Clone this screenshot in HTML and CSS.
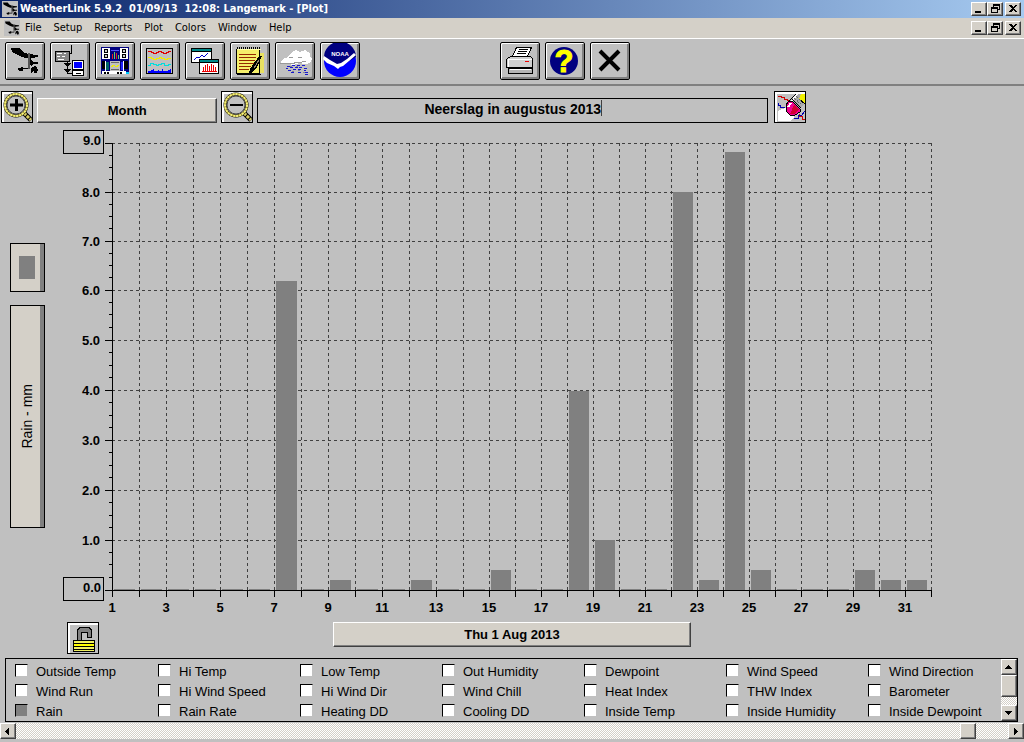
FILE: index.html
```
<!DOCTYPE html>
<html lang="en">
<head>
<meta charset="utf-8">
<title>WeatherLink - Plot</title>
<link rel="stylesheet" href="styles.css">
</head>
<body>
<svg class="defs" aria-hidden="true">
  <symbol id="vane" viewBox="4 3 31 31">
    <path d="M6 6h9l3 4 5 2 10 1v2l-7 1v2l3 2h4v2h-4l-3 2v-1h-3V16h-3l-5-2-8-4z"/>
    <path d="M23.500 11v16" stroke="#555" stroke-width="2"/>
    <path d="M13 26h2l1-1h2v1h5v1h-5v2h-4v-1h-1zM27 25l4-1 2 4-1 3h-3v-3l-3 3v-3z"/>
  </symbol>
  <symbol id="min" viewBox="0 0 12 10"><path d="M2 7h6v2H2z"/></symbol>
  <symbol id="restore" viewBox="0 0 12 10"><path d="M4 0h7v6H9V5h1V2H5v1H4zM2 3h7v6H2zM3 5v3h5V5z" fill-rule="evenodd"/></symbol>
  <symbol id="close" viewBox="0 0 12 10"><path d="M2 1h2l2 2 2-2h2L7 4.500 10 8H8L6 6 4 8H2l3-3.500z"/></symbol>
  <symbol id="lens" viewBox="0 0 30 30">
    <path d="M22 21l7 7" stroke="#000" stroke-width="5"/>
    <path d="M22 21l7 7" stroke="#d8cc60" stroke-width="3" stroke-dasharray="3 1"/>
    <circle cx="14" cy="13" r="11" fill="#c0c0c0" stroke="#000" stroke-width="3"/>
    <circle cx="14" cy="13" r="11" fill="none" stroke="#a89c30" stroke-width="2"/>
    <circle cx="14" cy="13" r="11" fill="none" stroke="#f4f080" stroke-width="2" stroke-dasharray="2 1"/>
    <circle cx="14" cy="13" r="9" fill="none" stroke="#444"/>
  </symbol>
</svg>

<header class="titlebar">
  <svg class="app-icon"><use href="#vane"/></svg>
  <h1 class="title">WeatherLink 5.9.2&nbsp; 01/09/13&nbsp; 12:08: Langemark - [Plot]</h1>
  <div class="caption">
    <button aria-label="Minimize"><svg><use href="#min"/></svg></button><button aria-label="Restore"><svg><use href="#restore"/></svg></button><button class="apart" aria-label="Close"><svg><use href="#close"/></svg></button>
  </div>
</header>

<nav class="menubar">
  <svg class="app-icon"><use href="#vane"/></svg>
  <button class="menu">File</button><button class="menu">Setup</button><button class="menu">Reports</button><button class="menu">Plot</button><button class="menu">Colors</button><button class="menu">Window</button><button class="menu">Help</button>
  <div class="caption">
    <button aria-label="Minimize plot"><svg><use href="#min"/></svg></button><button aria-label="Restore plot"><svg><use href="#restore"/></svg></button><button class="apart" aria-label="Close plot"><svg><use href="#close"/></svg></button>
  </div>
</nav>

<div class="toolbar">
  <button class="tool" aria-label="Station"><svg viewBox="1 1 38 36">
    <path d="M6 6h9l3 4 5 2 10 1v2l-7 1v2l3 2h4v2h-4l-3 2v-1h-3V16h-3l-5-2-8-4z"/>
    <path d="M23.500 11v16" stroke="#555" stroke-width="2"/>
    <path d="M13 26h2l1-1h2v1h5v1h-5v2h-4v-1h-1zM27 25l4-1 2 4-1 3h-3v-3l-3 3v-3z"/>
  </svg></button>
  <button class="tool" aria-label="Download"><svg viewBox="1 1 38 36">
    <path d="M21.500 3v8.500H18" fill="none" stroke="#000"/>
    <path d="M5.500 9.500h14v10h-14z" fill="#888" stroke="#000"/>
    <path d="M7 11.500h5M7 14.500h3M12 14.500h3M8 17.500h6M14 11.500h2" stroke="#fff"/>
    <path d="M17.500 20v12M18 31.500h4" stroke="#000"/>
    <path d="M14 21h7v1h-1v1h-1v1h-3v-1h-1v-1h-1zM14 27h7v1h-1v1h-1v1h-3v-1h-1v-1h-1z"/>
    <path d="M22.500 18.500h11v9h-11z" fill="#fff" stroke="#000"/><path d="M24 20h8v6h-8z" fill="#00f"/>
    <path d="M22.500 28.500h11v5h-11z" fill="#fff" stroke="#000"/><path d="M26 31.500h5" stroke="#000"/>
  </svg></button>
  <button class="tool" aria-label="Bulletin"><svg viewBox="1 1 38 36">
    <path d="M6 5h28v27H6z" fill="#000080"/>
    <path d="M7 6h8v11H7zM25 6h8v11h-8z" fill="#fff"/>
    <path d="M9 7h4v4H9zM9 12h4v4H9zM27 7h4v4h-4zM27 12h4v4h-4z"/>
    <path d="M10 8h2v2h-2zM10 13h2v2h-2zM28 8h2v2h-2zM28 13h2v2h-2z" fill="#ccc"/>
    <path d="M16 8h8v1h-8z" fill="#55f"/>
    <path d="M17.500 12v5M21.500 11v6" stroke="#d22"/><path d="M19.500 10v7M23.500 13v4" stroke="#6c6"/>
    <path d="M7 19h3v8H7zM29 19h4v8h-4z"/><path d="M11 20h3v8h-3z" fill="#066"/><path d="M26 20h2v8h-2z" fill="#22f"/>
    <path d="M10.500 19v10M28.500 19v10" stroke="#fff"/>
    <path d="M15 19h10v10H15z" fill="#c0c0c0"/><path d="M16 20h8v1h-8zM16 27h8v1h-8z" fill="#666"/>
    <path d="M16 25l3-2 2 2 3-2" fill="none" stroke="#ee0"/>
    <path d="M7 29h24v3H7z" fill="#fff"/><path d="M9 30h2v2H9zM12 30h2v2h-2zM22 30h2v2h-2zM25 30h2v2h-2z"/><path d="M31 30h3v2h-3z" fill="#0cf"/>
  </svg></button>
  <button class="tool" aria-label="Plot"><svg viewBox="1 1 38 36">
    <path d="M6.500 6.500h26v25h-26z" fill="#c0c0c0" stroke="#000"/>
    <path d="M8 9.500h3v1h2v1h3v-1h2v-1h3v1h2v1h3v-1h2v-1h3" fill="none" stroke="#d00"/>
    <path d="M8 15.500h3v1h2v1h3v-1h3v-1h2v1h3v1h3v-1h4" fill="none" stroke="#ee0"/>
    <path d="M8 23.500h2v-2h3v1h3v1h2v-1h3v-1h3v2h4v-1h3" fill="none" stroke="#0dd"/>
    <path d="M8 31v-2h3v-1h2v-1h1v2h4v-1h1v1h3v-2h1v2h5v-1h2v-1h1v4z" fill="#00f"/>
  </svg></button>
  <button class="tool" aria-label="Strip charts"><svg viewBox="1 1 38 36">
    <path d="M6.500 6.500h20v14h-20z" fill="#fff" stroke="#000"/><path d="M7 7h19v2H7z" fill="#088"/><path d="M7 9h19v1H7z"/>
    <path d="M9 18l3-3 2 1 3-3 2 2 4-4" fill="none" stroke="#00c"/>
    <path d="M14.500 17.500h19v14h-19z" fill="#fff" stroke="#000"/><path d="M15 18h18v2H15z" fill="#088"/><path d="M15 20h18v1H15z"/>
    <path d="M18.500 25v5M20.500 23v7M22.500 22v8M24.500 24v6M26.500 22v8M28.500 23v7M30.500 25v5M17 29.500h15" stroke="#e00"/>
  </svg></button>
  <button class="tool" aria-label="Notes"><svg viewBox="1 1 38 36">
    <path d="M30 11h4v20h-4z" fill="#e8e060"/>
    <path d="M6.500 7.500h23v24h-23z" fill="#f5ef6a" stroke="#000"/>
    <path d="M7 6.500h24" stroke="#000" stroke-width="3" stroke-dasharray="1 1"/><path d="M7 7.500h24" stroke="#ffa"/>
    <path d="M9 12.500h17M9 15.500h17M9 18.500h16M9 21.500h15M9 24.500h12M9 27.500h10" stroke="#952800"/>
    <path d="M29 14h3l-6 13-3 2-2 3h-2l1-5z"/><path d="M29 18l-5 8" stroke="#987"/>
    <path d="M7 32.500h24" stroke="#000"/>
  </svg></button>
  <button class="tool" aria-label="Rain"><svg viewBox="1 1 38 36">
    <path d="M5 20l3-3 5-2 3-4 5-3 4 2 5-2 5 3v3l2 3-2 4-5 1-6-1-5 2-7-1-6-1z" fill="#fff"/>
    <path d="M5 21h8l4 1 5-2h5l4-1M23 15l4 1M14 15h4" fill="none" stroke="#999"/>
    <path d="M12 24.500h3m2-1h3m2 0h3m2 0h3M11 26.500h2m2-1h3m2 0h3m2 0h2m2 1h3M13 28.500h3m2-1h3m2 0h3m3 1h2M16 30.500h3m4 0h3m4 0h3m-9-5h2m4 7h3" stroke="#1818d0"/>
    <path d="M15 24.500h2m4 0h2m-6 5h2m4-1h2m3 2h2" stroke="#808098"/>
  </svg></button>
  <button class="tool" aria-label="NOAA reports"><svg class="smooth" viewBox="1 1 38 36">
    <circle cx="20" cy="19" r="16" fill="#00f"/>
    <path d="M4 16a16 16 0 0 1 32-1L21 24z" fill="#000080"/>
    <path d="M4 14l6 4 7 4 4-1 6-4 7-6 2 2-7 6-6 5-3 1-2 2-4-3-7-3-4-4z" fill="#fff"/>
    <text x="20" y="14" class="noaa">NOAA</text>
  </svg></button>
  <span class="tool-space"></span>
  <button class="tool" aria-label="Print"><svg viewBox="1 1 38 36">
    <path d="M8.500 15.500l3-1h19l2 2v9h-26v-8z" fill="#d0d0d0" stroke="#000"/>
    <path d="M16.500 5.500h15l-4 9h-15z" fill="#fff" stroke="#000"/>
    <path d="M19 7.500h9M18 9.500h9M17 11.500h9" stroke="#000"/>
    <path d="M8 17h24v1H8zM8 17h1v8H8z" fill="#fff"/>
    <path d="M8.500 26.500h24v5h-24z" fill="#b4b4b4" stroke="#000"/><path d="M10 27h21v1H10z" fill="#fff"/>
    <path d="M25 19h4v1h-4z" fill="#e00"/>
  </svg></button>
  <button class="tool" aria-label="Help"><svg class="smooth" viewBox="1 1 38 36">
    <circle cx="19" cy="19" r="14" fill="#000080"/>
    <text x="19" y="30" class="question">?</text>
  </svg></button>
  <button class="tool" aria-label="Close window"><svg class="smooth" viewBox="1 1 38 36">
    <path d="M10 9l19 19M29 9L10 28" stroke="#000" stroke-width="4"/>
  </svg></button>
</div>

<div class="controls">
  <button class="square" aria-label="Zoom in"><svg class="smooth"><use href="#lens"/><path d="M8 13h13M14.500 7v12" stroke="#000" stroke-width="3"/></svg></button>
  <button class="raised span">Month</button>
  <button class="square" aria-label="Zoom out"><svg class="smooth"><use href="#lens"/><path d="M8 13h13" stroke="#000" stroke-width="2"/></svg></button>
  <div class="title-field"><input type="text" aria-label="Plot title" value="Neerslag in augustus 2013"><span class="caret"></span></div>
  <button class="square eraser" aria-label="Clear plot"><svg viewBox="1 1 30 30">
    <path d="M3 3h28v28H3z" fill="#c0c0c0"/>
    <path d="M4 30V20l7-3 9 9-4 4z" fill="#fff"/>
    <path d="M4 5.500h3v1h3v2h3v1h3v2h3M25 23v2h3v3h3" fill="none" stroke="#d00000"/>
    <path d="M4.500 12v2h2v2h4M20 27h4v-3h4l3-4" fill="none" stroke="#0000b0"/>
    <path d="M22 3l-6 7 9 8 6-6V3z" fill="#aaa"/><path d="M22 3l3-1-5 7-3 1z" fill="#fff"/>
    <path d="M27 3h4v10l-6-5z" fill="#f0f000"/><path d="M25 8l6 5M22 3l-7 7M18 8l9 9" stroke="#000"/>
    <path d="M20 7l8 7M22 5l7 7" stroke="#666" stroke-dasharray="1 1"/>
    <path d="M12 14l3-4h3l8 8v3l-5 3h-5l-4-4z" fill="#f00090" stroke="#000"/>
    <path d="M20 14l5 5-5 4h-4z" fill="#d00030"/><path d="M14 16l3-4" stroke="#fff" stroke-width="2"/>
  </svg></button>
</div>

<main class="plot">
  <div class="series">
    <button class="series-button swatch" aria-label="Rain color"><span></span></button>
    <button class="series-button series-name"><span>Rain - mm</span></button>
  </div>
  <svg class="chart" viewBox="45 124 979 494" role="img" aria-label="Rain in mm per day">
    <path class="grid" d="M112 143.500H931M112 192.500H931M112 241.500H931M112 290.500H931M112 340.500H931M112 390.500H931M112 440.500H931M112 490.500H931M112 540.500H931"/>
    <path class="grid" d="M139.500 143V590M166.500 143V590M193.500 143V590M220.500 143V590M247.500 143V590M274.500 143V590M301.500 143V590M328.500 143V590M355.500 143V590M382.500 143V590M409.500 143V590M436.500 143V590M463.500 143V590M489.500 143V590M515.500 143V590M541.500 143V590M567.500 143V590M593.500 143V590M619.500 143V590M645.500 143V590M671.500 143V590M697.500 143V590M723.500 143V590M749.500 143V590M775.500 143V590M801.500 143V590M827.500 143V590M853.500 143V590M879.500 143V590M905.500 143V590M931.500 143V590"/>
    <path class="bars" d="M276 281h21V590h-21zM330 580h21v10h-21zM411 580h21v10h-21zM491 570h20v20h-20zM569 391h20V590h-20zM595 540h20v50h-20zM673 192h20V590h-20zM699 580h20v10h-20zM725 152h20V590h-20zM751 570h20v20h-20zM855 570h20v20h-20zM881 580h20v10h-20zM907 580h20v10h-20z"/>
    <path class="bars" d="M114 589h21v1h-21zM141 589h21v1h-21zM168 589h21v1h-21zM195 589h21v1h-21zM222 589h21v1h-21zM249 589h21v1h-21zM303 589h21v1h-21zM357 589h21v1h-21zM384 589h21v1h-21zM438 589h21v1h-21zM465 589h20v1h-20zM517 589h20v1h-20zM543 589h20v1h-20zM621 589h20v1h-20zM647 589h20v1h-20zM777 589h20v1h-20zM803 589h20v1h-20zM829 589h20v1h-20z"/>
    <path class="axis" d="M112.500 143V597M105 590.500H932M105 143.500h7M105 192.500h7M105 241.500h7M105 290.500h7M105 340.500h7M105 390.500h7M105 440.500h7M105 490.500h7M105 540.500h7"/>
    <path class="axis" d="M109 155.500h3M109 167.500h3M109 179.500h3M109 204.500h3M109 216.500h3M109 228.500h3M109 253.500h3M109 265.500h3M109 277.500h3M109 302.500h3M109 314.500h3M109 327.500h3M109 352.500h3M109 365.500h3M109 377.500h3M109 402.500h3M109 415.500h3M109 427.500h3M109 452.500h3M109 465.500h3M109 477.500h3M109 502.500h3M109 515.500h3M109 527.500h3M109 552.500h3M109 564.500h3M109 577.500h3"/>
    <path class="axis" d="M139.500 591v6M166.500 591v6M193.500 591v6M220.500 591v6M247.500 591v6M274.500 591v6M301.500 591v6M328.500 591v6M355.500 591v6M382.500 591v6M409.500 591v6M436.500 591v6M463.500 591v6M489.500 591v6M515.500 591v6M541.500 591v6M567.500 591v6M593.500 591v6M619.500 591v6M645.500 591v6M671.500 591v6M697.500 591v6M723.500 591v6M749.500 591v6M775.500 591v6M801.500 591v6M827.500 591v6M853.500 591v6M879.500 591v6M905.500 591v6M931.500 591v6"/>
    <path class="axis" d="M63.500 130.500h40v23h-40zM63.500 577.500h40v23h-40z"/>
    <g class="y-labels">
      <text x="101" y="145">9.0</text><text x="100" y="197">8.0</text><text x="100" y="246">7.0</text><text x="100" y="295">6.0</text><text x="100" y="345">5.0</text><text x="100" y="395">4.0</text><text x="100" y="445">3.0</text><text x="100" y="495">2.0</text><text x="100" y="545">1.0</text><text x="101" y="592">0.0</text>
    </g>
    <g class="x-labels">
      <text x="112" y="612">1</text><text x="166" y="612">3</text><text x="220" y="612">5</text><text x="274" y="612">7</text><text x="328" y="612">9</text><text x="382" y="612">11</text><text x="436" y="612">13</text><text x="489" y="612">15</text><text x="541" y="612">17</text><text x="593" y="612">19</text><text x="645" y="612">21</text><text x="697" y="612">23</text><text x="749" y="612">25</text><text x="801" y="612">27</text><text x="853" y="612">29</text><text x="905" y="612">31</text>
    </g>
  </svg>
</main>

<div class="date-row">
  <button class="square lock" aria-label="Lock scale"><svg viewBox="1 1 30 30">
    <path d="M10.500 18V8l3-3h8l3 3v7h-4v-5h-6v8z" fill="#808080" stroke="#000"/>
    <path d="M6.500 18.500h21v11h-21z" fill="#f0f060" stroke="#000"/>
    <path d="M7 21.500h20M7 24.500h20M7 27.500h20" stroke="#000"/><path d="M7 23h20" stroke="#ff0" stroke-width="2"/>
  </svg></button>
  <button class="raised date">Thu 1 Aug 2013</button>
</div>

<section class="sensors">
  <div class="sensor-grid">
    <label><input type="checkbox">Outside Temp</label><label><input type="checkbox">Hi Temp</label><label><input type="checkbox">Low Temp</label><label><input type="checkbox">Out Humidity</label><label><input type="checkbox">Dewpoint</label><label><input type="checkbox">Wind Speed</label><label><input type="checkbox">Wind Direction</label>
    <label><input type="checkbox">Wind Run</label><label><input type="checkbox">Hi Wind Speed</label><label><input type="checkbox">Hi Wind Dir</label><label><input type="checkbox">Wind Chill</label><label><input type="checkbox">Heat Index</label><label><input type="checkbox">THW Index</label><label><input type="checkbox">Barometer</label>
    <label><input type="checkbox" checked>Rain</label><label><input type="checkbox">Rain Rate</label><label><input type="checkbox">Heating DD</label><label><input type="checkbox">Cooling DD</label><label><input type="checkbox">Inside Temp</label><label><input type="checkbox">Inside Humidity</label><label><input type="checkbox">Inside Dewpoint</label>
  </div>
  <div class="vscroll">
    <button class="scroll-button" aria-label="Scroll up"><svg viewBox="0 0 8 8"><path d="M3 2h1v1h1v1h1v1h1v1H0V5h1V4h1V3h1z"/></svg></button>
    <div class="thumb"></div>
    <button class="scroll-button bottom" aria-label="Scroll down"><svg viewBox="0 0 8 8"><path d="M3 6h1V5h1V4h1V3h1V2H0v1h1v1h1v1h1z"/></svg></button>
  </div>
</section>

<footer class="hscroll">
  <button class="scroll-button" aria-label="Scroll left"><svg viewBox="0 0 8 8"><path d="M1 4h1V3h1V2h1V1h1v7H4V7H3V6H2V5H1z"/></svg></button>
  <div class="thumb"></div>
  <button class="scroll-button" aria-label="Scroll right"><svg viewBox="0 0 8 8"><path d="M6 4H5V3H4V2H3V1H2v7h1V7h1V6h1V5h1z"/></svg></button>
</footer>
</body>
</html>
```
FILE: styles.css
```
* { box-sizing: border-box; }
body {
  margin: 0;
  background: #c0c0c0;
  color: #000;
  font: 13px/16px "Liberation Sans", Arial, sans-serif;
}
button {
  margin: 0;
  padding: 0;
  border: 0;
  color: inherit;
  font: inherit;
}
svg { display: block; shape-rendering: crispEdges; }
.smooth { shape-rendering: auto; }
.defs { display: none; }

.titlebar, .menubar {
  display: flex;
  align-items: center;
  font-family: "DejaVu Sans Condensed", Tahoma, sans-serif;
  font-size: 11px;
}
.titlebar {
  height: 18px;
  padding: 0 3px 0 2px;
  background: linear-gradient(90deg, #0a246a, #a6caf0);
}
.title {
  margin: 0 0 0 2px;
  color: #fff;
  font-size: 11px;
  line-height: 18px;
  white-space: nowrap;
}
.menubar {
  height: 21px;
  padding: 0 3px 0 4px;
  border-bottom: 1px solid #fff;
  background: #d4d0c8;
}
.app-icon { width: 16px; height: 16px; background: #c0c0c0; shape-rendering: auto; }
.menu { padding: 0 6px; background: none; }
.menubar .app-icon { margin-right: -1px; }
.caption { display: flex; margin-left: auto; }
.caption button {
  width: 16px;
  height: 14px;
  padding: 1px;
  border: 1px solid;
  border-color: #fff #404040 #404040 #fff;
  background: #d4d0c8;
  box-shadow: inset -1px -1px #808080;
}
.caption svg { width: 12px; height: 10px; }
.caption .apart { margin-left: 2px; }

.toolbar {
  display: flex;
  gap: 5px;
  padding: 3px 5px 4px;
  border-bottom: 2px solid #808080;
}
.tool {
  width: 40px;
  height: 38px;
  border: 1px solid #000;
  border-radius: 2px;
  background: #c0c0c0;
  box-shadow: inset 1px 1px #fff, inset -2px -2px #808080;
}
.tool svg { width: 38px; height: 36px; }
.tool-space { width: 130px; }
.noaa { fill: #fff; font-size: 6px; font-weight: bold; text-anchor: middle; }
.question { fill: #ff0; font-size: 31px; font-weight: bold; text-anchor: middle; stroke: #ff0; }

.controls {
  display: flex;
  align-items: flex-end;
  gap: 4px;
  padding: 5px 218px 1px 1px;
}
.square {
  flex: none;
  width: 32px;
  height: 32px;
  border: 1px solid #000;
  background: #c0c0c0;
  box-shadow: inset 2px 2px #fff;
}
.square svg { width: 30px; height: 30px; }
.eraser { margin-left: 2px; }
.raised {
  height: 25px;
  border: 1px solid;
  border-color: #fff #404040 #404040 #fff;
  background: #d4d0c8;
  box-shadow: inset -1px -1px #808080;
  font-weight: bold;
}
.span { flex: 179 1 0; }
.title-field { position: relative; flex: 512 1 0; }
.title-field input {
  display: block;
  width: 100%;
  height: 25px;
  padding: 0 0 4px;
  border: 1px solid #000;
  background: #c0c0c0;
  color: #000;
  font: bold 14px/16px "Liberation Sans", Arial, sans-serif;
  text-align: center;
}
.caret {
  position: absolute;
  left: calc(50% + 88px);
  top: 2px;
  width: 1px;
  height: 16px;
  background: #404040;
}

.plot { display: flex; }
.series {
  display: flex;
  flex: none;
  flex-direction: column;
  gap: 13px;
  width: 45px;
  padding: 119px 0 0 10px;
}
.series-button {
  display: grid;
  place-items: center;
  padding-right: 2px;
  border: 1px solid #000;
  background: #d4d0c8;
  box-shadow: inset -4px 0 #808080;
}
.swatch { height: 49px; }
.swatch span { width: 16px; height: 23px; background: #808080; }
.series-name { height: 223px; font-size: 14px; }
.series-name span { writing-mode: vertical-rl; transform: rotate(180deg); }
.chart { flex: 1; min-width: 0; }
.grid { fill: none; stroke: #404040; stroke-dasharray: 3 3; }
.bars { fill: #808080; }
.axis { fill: none; stroke: #000; }
.chart text { font-size: 13px; font-weight: bold; }
.y-labels { text-anchor: end; }
.x-labels { text-anchor: middle; }

.date-row {
  display: grid;
  grid-template-columns: 333fr 358fr 333fr;
  align-items: start;
  padding: 4px 0;
}
.date-row .square { margin-left: 67px; }

.sensors {
  display: flex;
  margin: 0 6px 0 5px;
  border: 1px solid #000;
}
.sensor-grid {
  display: grid;
  flex: 1;
  grid-template-columns: 143fr repeat(5, 142fr) 133fr;
  grid-auto-rows: 20px;
  padding: 2px 0 0 9px;
}
.sensor-grid label {
  display: flex;
  align-items: center;
  gap: 8px;
  padding-top: 2px;
  white-space: nowrap;
}
.sensor-grid input {
  width: 13px;
  height: 13px;
  margin: 0 0 3px;
  border: 1px solid;
  border-color: #000 #c0c0c0 #c0c0c0 #000;
  background: #fff;
  appearance: none;
}
.sensor-grid input:checked { background: #808080; }

.vscroll, .hscroll {
  display: flex;
  background: repeating-conic-gradient(#fff 0 25%, #d4d0c8 0 50%) 0 0 / 2px 2px;
}
.vscroll { flex-direction: column; width: 16px; }
.scroll-button, .thumb {
  flex: none;
  width: 16px;
  height: 16px;
  border: 1px solid;
  border-color: #fff #404040 #404040 #fff;
  background: #d4d0c8;
  box-shadow: inset -1px -1px #808080;
}
.scroll-button { padding: 3px; }
.scroll-button svg { width: 8px; height: 8px; }
.vscroll .thumb { height: 22px; }
.vscroll .bottom { margin-top: auto; }
.hscroll {
  margin-top: 1px;
  box-shadow: 0 1px #d4d0c8, 0 2px #fff, 0 4px #d4d0c8;
}
.hscroll .thumb { margin: 0 32px 0 auto; }
```
